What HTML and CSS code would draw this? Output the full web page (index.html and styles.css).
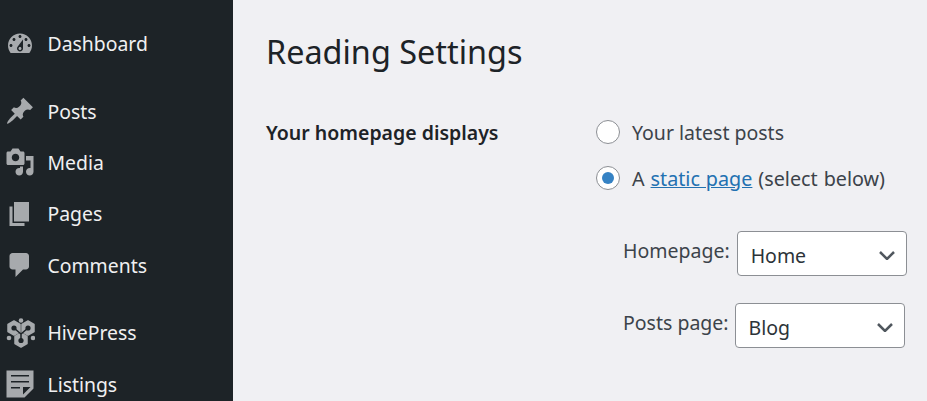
FILE: index.html
```html
<!DOCTYPE html>
<html lang="en">
<head>
<meta charset="utf-8">
<title>Reading Settings</title>
<link rel="stylesheet" href="styles.css">
</head>
<body>
<div class="layout">
  <nav class="sidebar">
    <ul class="menu menu-first">
      <li class="item"><svg class="icon" viewBox="0 0 20 20"><path d="M3.76 16h12.48c1.1-1.37 1.76-3.11 1.76-5 0-4.42-3.58-8-8-8s-8 3.58-8 8c0 1.89.66 3.63 1.76 5zM10 4c.55 0 1 .45 1 1s-.45 1-1 1-1-.45-1-1 .45-1 1-1zM6 6c.55 0 1 .45 1 1s-.45 1-1 1-1-.45-1-1 .45-1 1-1zm8 0c.55 0 1 .45 1 1s-.45 1-1 1-1-.45-1-1 .45-1 1-1zm-5.37 5.55L12 7v6c0 1.1-.9 2-2 2s-2-.9-2-2c0-.57.24-1.08.63-1.45zM4 10c.55 0 1 .45 1 1s-.45 1-1 1-1-.45-1-1 .45-1 1-1zm12 0c.55 0 1 .45 1 1s-.45 1-1 1-1-.45-1-1 .45-1 1-1zm-5 3c0-.55-.45-1-1-1s-1 .45-1 1 .45 1 1 1 1-.45 1-1z"/></svg><span>Dashboard</span></li>
    </ul>
    <ul class="menu">
      <li class="item"><svg class="icon" viewBox="0 0 20 20"><path d="M10.44 3.02l1.82-1.82 6.36 6.35-1.83 1.82c-1.05-.68-2.48-.57-3.41.36l-.75.75c-.92.93-1.04 2.35-.35 3.41l-1.83 1.82-2.41-2.41-2.8 2.79c-.42.42-3.38 2.71-3.8 2.29s1.86-3.39 2.28-3.81l2.79-2.79L4.1 9.36l1.83-1.82c1.05.69 2.48.57 3.4-.36l.75-.75c.93-.92 1.05-2.35.36-3.41z"/></svg><span>Posts</span></li>
      <li class="item"><svg class="icon" viewBox="0 0 20 20"><path d="M13 11V4c0-.55-.45-1-1-1h-1.67L9 1H5L3.67 3H2c-.55 0-1 .45-1 1v7c0 .55.45 1 1 1h10c.55 0 1-.45 1-1zM7 4.5c1.38 0 2.5 1.12 2.5 2.5S8.38 9.5 7 9.5 4.5 8.38 4.5 7 5.62 4.5 7 4.5zM14 6h5v10.5c0 1.38-1.12 2.5-2.5 2.5S14 17.88 14 16.5s1.12-2.5 2.5-2.5c.17 0 .34.02.5.05V9h-3V6zm-4 8.05V13h2v3.5c0 1.38-1.12 2.5-2.5 2.5S7 17.88 7 16.5 8.12 14 9.5 14c.17 0 .34.02.5.05z"/></svg><span>Media</span></li>
      <li class="item"><svg class="icon" viewBox="0 0 20 20"><path d="M6 15V2h10v13H6zm-1 1h8v2H3V5h2v11z"/></svg><span>Pages</span></li>
      <li class="item"><svg class="icon" viewBox="0 0 20 20"><path d="M5 2h9c1.1 0 2 .9 2 2v7c0 1.1-.9 2-2 2h-2l-5 5v-5H5c-1.1 0-2-.9-2-2V4c0-1.1.9-2 2-2z"/></svg><span>Comments</span></li>
    </ul>
    <ul class="menu">
      <li class="item"><svg class="icon" viewBox="0 0 30 30">
        <circle cx="16" cy="2.500" r="2.300"/><circle cx="4" cy="20" r="2.300"/><circle cx="28" cy="20" r="2.300"/>
        <polygon class="hex" points="9,3 15,6.500 15,13.500 9,17 3,13.500 3,6.500"/>
        <polygon class="hex" points="23,3 29,6.500 29,13.500 23,17 17,13.500 17,6.500"/>
        <polygon class="hex" points="16,15 22,18.500 22,25.500 16,29 10,25.500 10,18.500"/>
        <path class="hex-line" d="M9 10l7 6 7-6M16 16v7"/>
        <circle class="hex-dot" cx="9" cy="10" r="2.600"/><circle class="hex-dot" cx="23" cy="10" r="2.600"/><circle class="hex-dot" cx="16" cy="22.500" r="2.600"/>
      </svg><span>HivePress</span></li>
      <li class="item"><svg class="icon" viewBox="0 0 20 20"><path d="M1 1h18v12l-6 6H1V1zm3 3v1h12V4H4zm0 4v1h12V8H4zm6 5v-1H4v1h6zm2 4l5-5h-5v5z"/></svg><span>Listings</span></li>
    </ul>
  </nav>
  <main class="content">
    <h1 class="title">Reading Settings</h1>
    <div class="setting">
      <div class="setting-label">Your homepage displays</div>
      <div class="setting-fields">
        <label class="radio-row"><input class="radio" type="radio" name="show"><span>Your latest posts</span></label>
        <label class="radio-row radio-row-wide"><input class="radio" type="radio" name="show" checked><span>A <a class="link" href="#">static page</a> (select below)</span></label>
        <div class="pages">
          <div class="page-row page-row-home">
            <label class="page-label" for="home">Homepage:</label>
            <div class="select-wrap">
              <select class="select" id="home"><option>Home</option></select>
              <svg class="chevron" viewBox="0 0 16 9"><path d="M1 1l7 7 7-7"/></svg>
            </div>
          </div>
          <div class="page-row">
            <label class="page-label" for="blog">Posts page:</label>
            <div class="select-wrap">
              <select class="select" id="blog"><option>Blog</option></select>
              <svg class="chevron" viewBox="0 0 16 9"><path d="M1 1l7 7 7-7"/></svg>
            </div>
          </div>
        </div>
      </div>
    </div>
  </main>
</div>
</body>
</html>
```
FILE: styles.css
```css
* { box-sizing: border-box; }
html, body { margin: 0; height: 100%; overflow: hidden; }
body { font-family: "Noto Sans", "Open Sans", sans-serif; background: #f0f0f3; color: #3c434a; }
.layout { display: flex; height: 401px; overflow: hidden; }
.sidebar { flex: 0 0 233px; background: #1d2327; color: #f0f0f1; padding-top: 18px; }
.menu { list-style: none; margin: 0 0 16px; padding: 0; }
.item { display: flex; align-items: center; height: 51.4px; font-size: 19.400px; padding-left: 5px; gap: 12.500px; white-space: nowrap; }
.icon { flex: 0 0 30px; width: 30px; height: 30px; fill: #a7aaad; }
.hex { stroke: #a7aaad; stroke-width: 1.500; stroke-linejoin: round; }
.hex-line { fill: none; stroke: #1d2327; stroke-width: 1.500; }
.hex-dot { fill: #1d2327; }
.content { flex: 1; padding: 29px 0 0 33px; min-width: 0; }
.title { margin: 0; font-size: 32.400px; font-weight: 400; line-height: 44px; color: #1d2327; }
.setting { display: flex; margin-top: 36px; }
.setting-label { flex: 0 0 330px; font-size: 19.500px; font-weight: 600; color: #1d2327; line-height: 28px; padding-top: 10px; }
.setting-fields { flex: 1; min-width: 0; }
.radio-row { display: flex; align-items: center; height: 46px; font-size: 19.500px; gap: 12px; white-space: nowrap; }
.radio-row-wide { font-size: 19.750px; word-spacing: 0.800px; }
.radio { appearance: none; width: 24px; height: 24px; margin: 0; border: 1.500px solid #8c8f94; border-radius: 50%; background: #fff; display: grid; place-items: center; }
.radio:checked::before { content: ""; width: 12px; height: 12px; border-radius: 50%; background: #3582c4; }
.link { color: #2271b1; }
.pages { padding: 30px 0 0 27px; display: flex; flex-direction: column; gap: 27px; }
.page-row { display: flex; align-items: center; gap: 6px; }
.page-row-home { gap: 7px; }
.page-label { font-size: 19.500px; position: relative; top: -3px; }
.select-wrap { position: relative; width: 170px; height: 45px; }
.select { appearance: none; width: 100%; height: 100%; margin: 0; padding: 3px 40px 0 13px; border: 1px solid #8c8f94; border-radius: 4px; background: #fff; color: #2c3338; font: 400 19.500px "Noto Sans", sans-serif; }
.chevron { position: absolute; right: 12px; top: 20px; width: 16px; height: 9px; fill: none; stroke: #50575e; stroke-width: 2.500; pointer-events: none; }
```
